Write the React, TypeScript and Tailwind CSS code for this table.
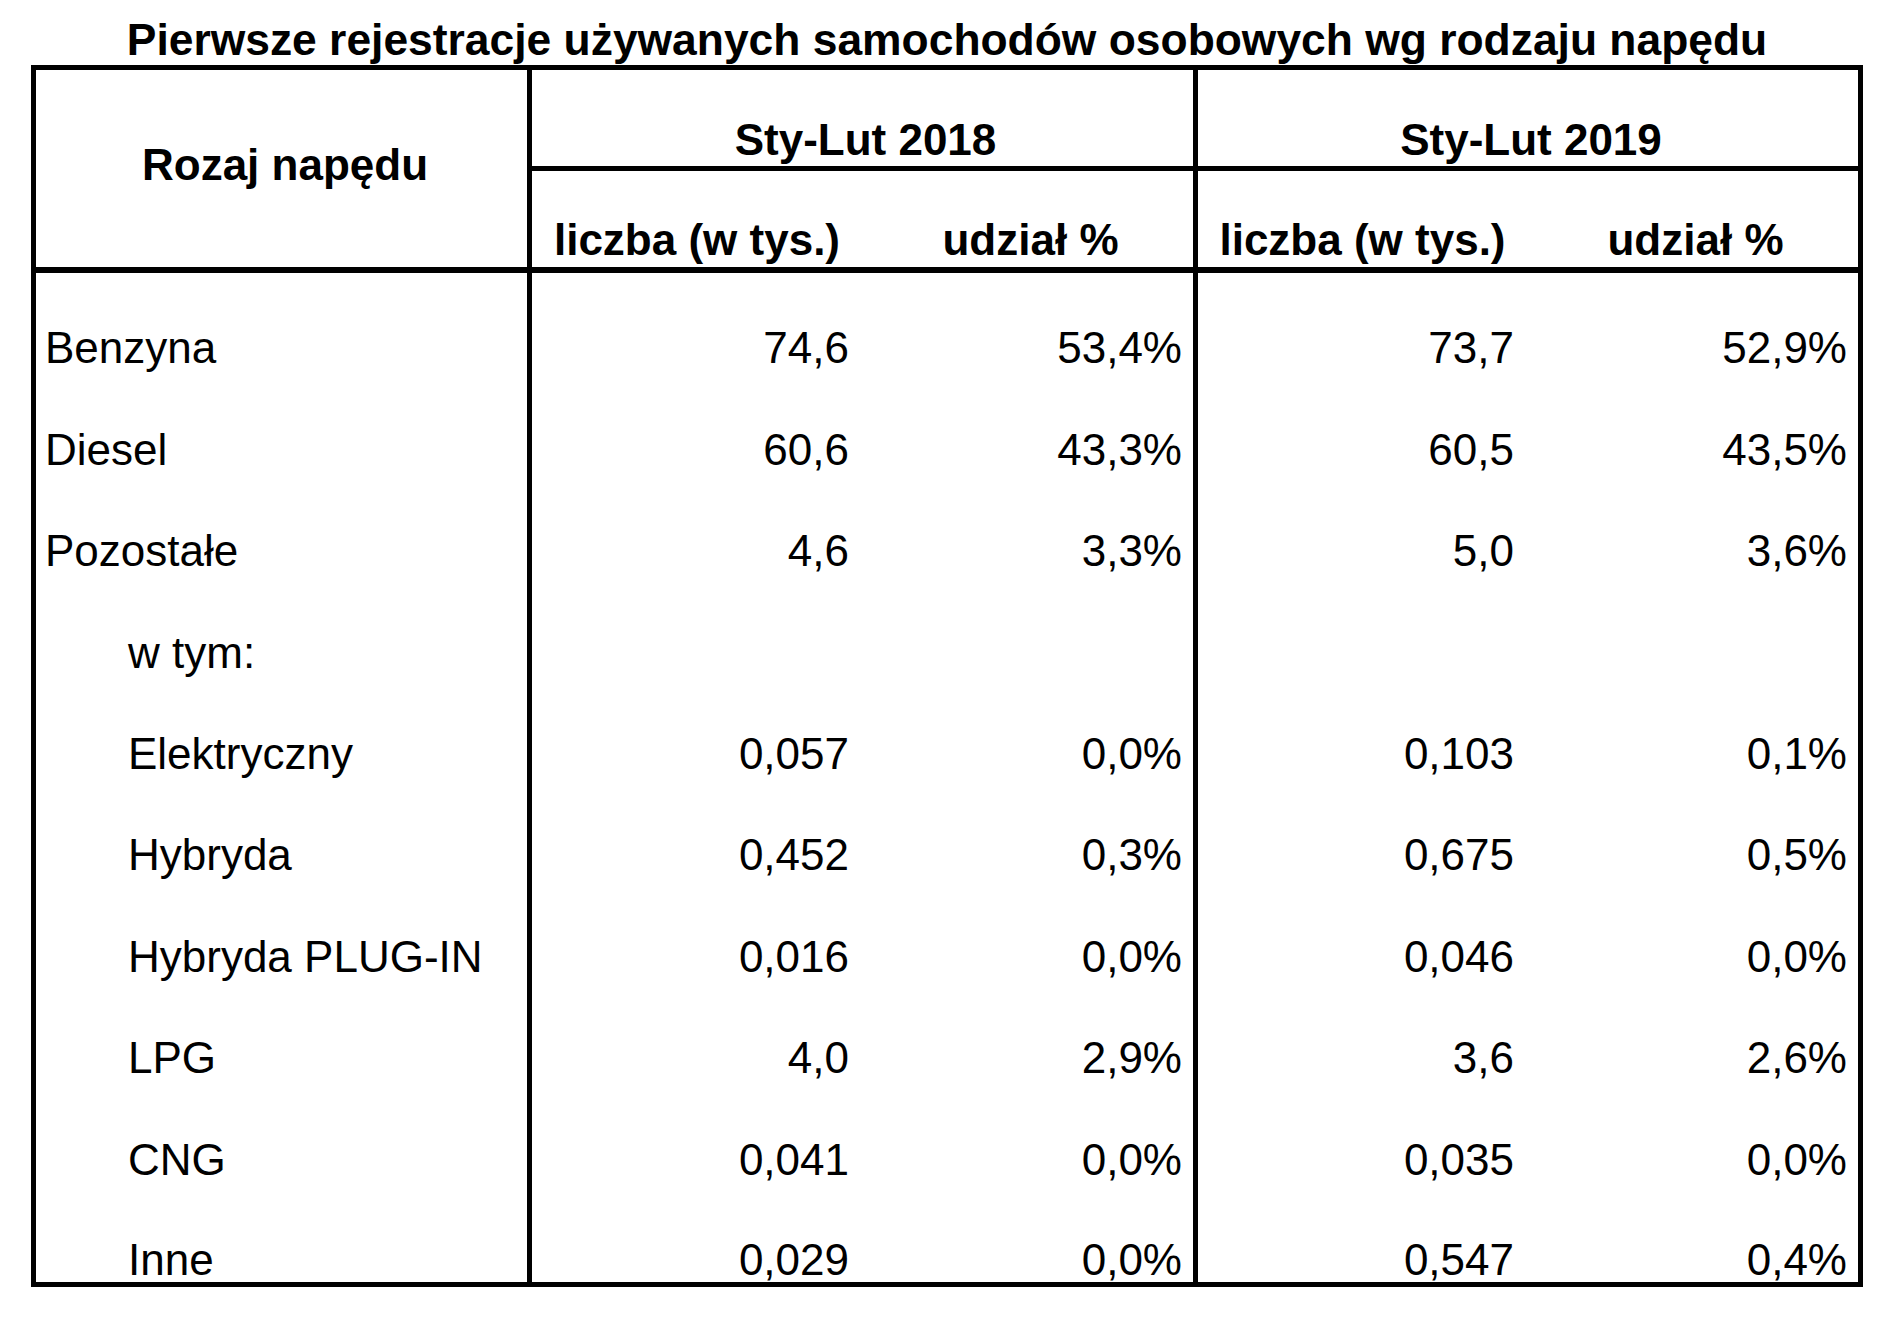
import React from "react";

type Row = { label: string; indent?: boolean; v: [string, string, string, string] };

const rows: Row[] = [
  { label: "Benzyna", v: ["74,6", "53,4%", "73,7", "52,9%"] },
  { label: "Diesel", v: ["60,6", "43,3%", "60,5", "43,5%"] },
  { label: "Pozostałe", v: ["4,6", "3,3%", "5,0", "3,6%"] },
  { label: "w tym:", indent: true, v: ["", "", "", ""] },
  { label: "Elektryczny", indent: true, v: ["0,057", "0,0%", "0,103", "0,1%"] },
  { label: "Hybryda", indent: true, v: ["0,452", "0,3%", "0,675", "0,5%"] },
  { label: "Hybryda PLUG-IN", indent: true, v: ["0,016", "0,0%", "0,046", "0,0%"] },
  { label: "LPG", indent: true, v: ["4,0", "2,9%", "3,6", "2,6%"] },
  { label: "CNG", indent: true, v: ["0,041", "0,0%", "0,035", "0,0%"] },
  { label: "Inne", indent: true, v: ["0,029", "0,0%", "0,547", "0,4%"] },
];

export default function App() {
  return (
    <div
      className="w-[1880px] h-[1318px] bg-white text-black overflow-hidden"
      style={{ fontFamily: '"Liberation Sans", Arial, sans-serif' }}
    >
      <div className="ml-[31px] w-[1832px]">
        <div className="h-[65px] pt-[18px] text-center font-bold text-[44.4px] leading-[44px] whitespace-nowrap">
          Pierwsze rejestracje używanych samochodów osobowych wg rodzaju napędu
        </div>
        <div className="border-[5px] border-black h-[1222px] text-[44px] leading-[44px]">
          {/* header */}
          <div className="flex h-[203px] border-b-[6px] border-black font-bold">
            <div className="w-[496px] border-r-[5px] border-black flex items-center justify-center pb-[8px] pl-[7px]">
              Rozaj napędu
            </div>
            <div className="w-[666px] border-r-[5px] border-black flex flex-col">
              <div className="h-[101px] border-b-[5px] border-black flex items-end justify-center pb-[4px] pl-[6px]">
                Sty-Lut 2018
              </div>
              <div className="h-[96px] flex">
                <div className="w-[328px] flex items-end justify-center pb-[5px] pl-[2px]">liczba (w tys.)</div>
                <div className="flex-1 flex items-end justify-center pb-[5px] pl-[8px]">udział %</div>
              </div>
            </div>
            <div className="flex-1 flex flex-col">
              <div className="h-[101px] border-b-[5px] border-black flex items-end justify-center pb-[4px] pl-[6px]">
                Sty-Lut 2019
              </div>
              <div className="h-[96px] flex">
                <div className="w-[327px] flex items-end justify-center pb-[5px] pl-[2px]">liczba (w tys.)</div>
                <div className="flex-1 flex items-end justify-center pb-[5px] pl-[8px]">udział %</div>
              </div>
            </div>
          </div>
          {/* body */}
          {rows.map((r, i) => {
            const last = i === rows.length - 1;
            const pb = last ? "pb-0" : "pb-[4px]";
            return (
              <div
                key={i}
                className={"flex whitespace-nowrap " + (last ? "h-[96.4px]" : "h-[101.4px]")}
              >
                <div
                  className={
                    "w-[496px] border-r-[5px] border-black flex items-end " +
                    pb +
                    " " +
                    (r.indent ? "pl-[92px]" : "pl-[9px]")
                  }
                >
                  {r.label}
                </div>
                <div className={"w-[328px] flex items-end justify-end pr-[11px] " + pb}>{r.v[0]}</div>
                <div className={"w-[338px] border-r-[5px] border-black flex items-end justify-end pr-[11px] " + pb}>
                  {r.v[1]}
                </div>
                <div className={"w-[327px] flex items-end justify-end pr-[11px] " + pb}>{r.v[2]}</div>
                <div className={"flex-1 flex items-end justify-end pr-[11px] " + pb}>{r.v[3]}</div>
              </div>
            );
          })}
        </div>
      </div>
    </div>
  );
}
